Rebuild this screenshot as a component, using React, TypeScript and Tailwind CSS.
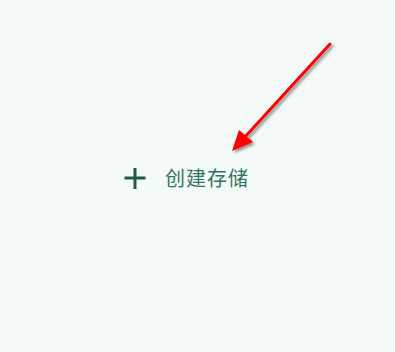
import React from 'react';

const Arrow: React.FC = () => (
  <svg className="pointer-events-none absolute inset-0" width="395" height="352" viewBox="0 0 395 352">
    <defs>
      <filter id="shadow" x="-20%" y="-20%" width="140%" height="140%">
        <feDropShadow dx="2" dy="2" stdDeviation="1.5" floodColor="#000" floodOpacity="0.45" />
      </filter>
    </defs>
    <g filter="url(#shadow)">
      <line x1="330" y1="44" x2="244" y2="138" stroke="#ff0000" strokeWidth="3" strokeLinecap="round" />
      <polygon points="232,151 239,130 253,142" fill="#ff0000" />
    </g>
  </svg>
);

export default function App() {
  return (
    <div className="relative h-[352px] w-[395px] overflow-hidden bg-[#f4faf7]">
      <div className="flex h-full items-center pl-[124px] pt-[4px]">
        <button className="flex items-center gap-[19px] text-[#33765f]">
          <svg width="22" height="22" viewBox="0 0 22 22" className="text-[#1f5a45]">
            <path d="M11 1v21M0.5 11h21" stroke="currentColor" strokeWidth="3" />
          </svg>
          <span
            className="text-[20px] leading-none tracking-[1px]"
            style={{ fontFamily: '"Noto Sans CJK SC", "Noto Sans", sans-serif' }}
          >
            创建存储
          </span>
        </button>
      </div>
      <Arrow />
    </div>
  );
}
